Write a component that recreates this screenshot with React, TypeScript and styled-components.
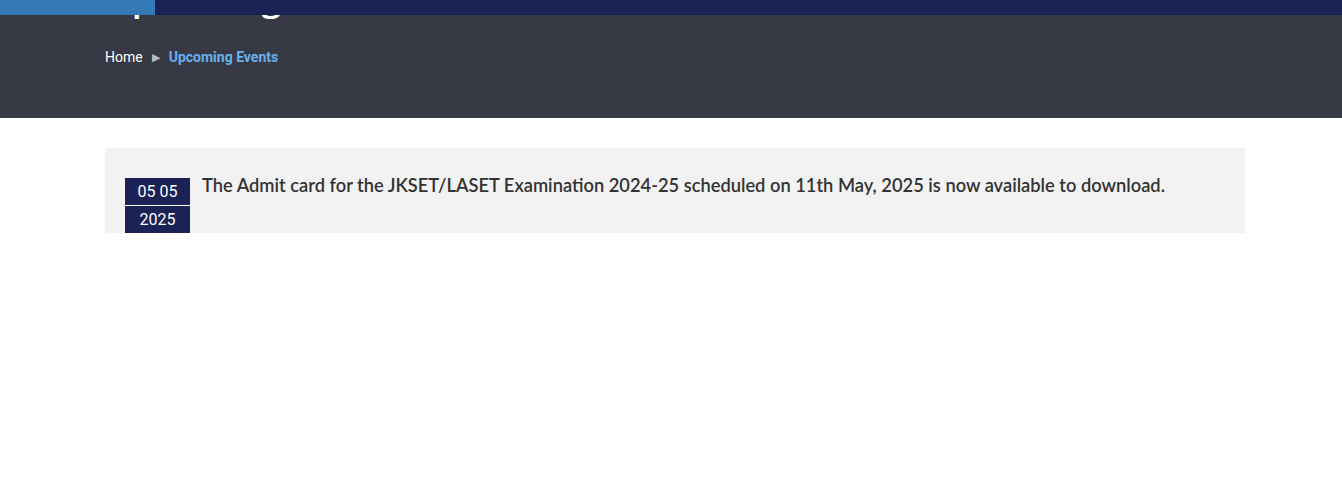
import React, { FC } from "react";
import styled, { createGlobalStyle } from "styled-components";

const GlobalStyle = createGlobalStyle`
  html, body {
    margin: 0;
    padding: 0;
    background: #fff;
  }
`;

const TopBar = styled.div`
  position: fixed;
  top: 0;
  left: 0;
  right: 0;
  height: 15px;
  display: flex;
  background-color: #1b2255;
  z-index: 10;
`;

const TopBarAccent = styled.div`
  width: 155px;
  background-color: #337ab7;
`;

const Banner = styled.div`
  height: 118px;
  background-color: #373945;
  overflow: hidden;
`;

const Container = styled.div`
  width: 1140px;
  margin-left: calc(50% - 566px);
`;

const PageTitle = styled.h1`
  margin: -25px 0 0 0;
  font-family: "Open Sans", sans-serif;
  font-size: 36px;
  font-weight: 600;
  line-height: 44px;
  color: #fff;
`;

const Breadcrumb = styled.div`
  display: flex;
  align-items: center;
  gap: 9px;
  margin-top: 29px;
  font-family: Roboto, "Liberation Sans", sans-serif;
  font-size: 14px;
  line-height: 16px;
`;

const Crumb = styled.span<{ active?: boolean }>`
  color: ${(props) => (props.active ? "#67b1f0" : "#fff")};
  font-weight: ${(props) => (props.active ? 700 : 400)};
`;

const Arrow = styled.span`
  color: #b9bbc2;
  font-size: 11px;
  margin-top: 2px;
`;

const EventsBox = styled.div`
  margin-top: 30px;
  background-color: #f2f2f2;
  padding: 30px 20px 0 20px;
  display: flex;
  align-items: flex-start;
  gap: 12px;
`;

const DateBlock = styled.div`
  width: 65px;
  display: flex;
  flex-direction: column;
  gap: 1px;
  background-color: #fff;
`;

const DatePart = styled.div`
  height: 27px;
  background-color: #1b2255;
  color: #fff;
  font-family: Roboto, "Liberation Sans", sans-serif;
  font-size: 16px;
  line-height: 27px;
  text-align: center;
`;

const EventText = styled.p`
  margin: -5px 0 0 0;
  font-family: Lato, "Noto Sans", sans-serif;
  font-size: 18.3px;
  font-weight: 600;
  line-height: 24px;
  color: #333;
`;

const App: FC = () => {
  return (
    <>
      <GlobalStyle />
      <TopBar>
        <TopBarAccent />
      </TopBar>
      <Banner>
        <Container>
          <PageTitle>Upcoming Events</PageTitle>
          <Breadcrumb>
            <Crumb>Home</Crumb>
            <Arrow>▶</Arrow>
            <Crumb active>Upcoming Events</Crumb>
          </Breadcrumb>
        </Container>
      </Banner>
      <Container>
        <EventsBox>
          <DateBlock>
            <DatePart>05 05</DatePart>
            <DatePart>2025</DatePart>
          </DateBlock>
          <EventText>
            The Admit card for the JKSET/LASET Examination 2024-25 scheduled on
            11th May, 2025 is now available to download.
          </EventText>
        </EventsBox>
      </Container>
    </>
  );
};

export default App;
